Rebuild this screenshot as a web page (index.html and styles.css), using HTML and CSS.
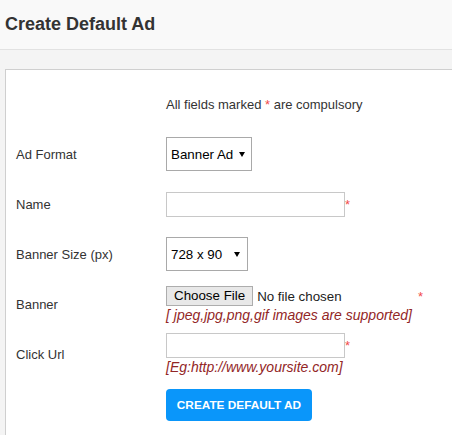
FILE: index.html
```html
<!DOCTYPE html>
<html>
<head>
<meta charset="utf-8">
<title>Create Default Ad</title>
<link rel="stylesheet" href="styles.css">
</head>
<body>
<header class="page-header">
  <h1 class="page-title">Create Default Ad</h1>
</header>
<main class="page-body">
  <section class="panel">
    <form class="ad-form">
      <div class="label"></div>
      <div class="field intro">All fields marked <span class="req">*</span> are compulsory</div>

      <label class="label">Ad Format</label>
      <div class="field">
        <select class="select select-format">
          <option>Banner Ad</option>
        </select>
      </div>

      <label class="label">Name</label>
      <div class="field">
        <input type="text" class="text-input"><span class="req">*</span>
      </div>

      <label class="label">Banner Size (px)</label>
      <div class="field">
        <select class="select select-size">
          <option>728 x 90</option>
        </select>
      </div>

      <label class="label">Banner</label>
      <div class="field">
        <div><input type="file" class="file-input"><span class="req">*</span></div>
        <div class="hint">[ jpeg,jpg,png,gif images are supported]</div>
      </div>

      <label class="label">Click Url</label>
      <div class="field">
        <div><input type="text" class="text-input"><span class="req">*</span></div>
        <div class="hint">[Eg:http://www.yoursite.com]</div>
      </div>
    </form>
    <div class="actions">
      <button type="button" class="btn-primary">Create Default Ad</button>
    </div>
  </section>
</main>
</body>
</html>
```

FILE: styles.css
```css
html, body {
  margin: 0;
  padding: 0;
  overflow: hidden;
  height: 100%;
}
body {
  font-family: "Liberation Sans", Arial, sans-serif;
  color: #333;
  background: #f4f4f4;
  display: flex;
  flex-direction: column;
}
.page-header {
  flex: 0 0 auto;
  height: 49px;
  border-bottom: 1px solid #e2e2e2;
  background: #f9f9f9;
  display: flex;
  align-items: center;
  padding-left: 5px;
}
.page-title {
  margin: 0;
  font-size: 18px;
  font-weight: bold;
  color: #333;
  line-height: 21px;
}
.page-body {
  flex: 1 1 auto;
  min-height: 0;
  display: flex;
  flex-direction: column;
  padding: 19px 0 0 5px;
}
.panel {
  flex: 1 1 auto;
  min-height: 0;
  overflow: hidden;
  background: #fff;
  border-top: 1px solid #cfcfcf;
  border-left: 1px solid #cfcfcf;
  padding: 9px 0 0 10px;
}
.ad-form {
  display: grid;
  grid-template-columns: 150px 1fr;
  grid-auto-rows: 50px;
  align-items: center;
}
.label {
  font-size: 13px;
  color: #333;
}
.field {
  font-size: 13px;
}
.intro {
  color: #333;
}
.req {
  color: #f24b4b;
  font-size: 13px;
}
.select {
  appearance: none;
  -webkit-appearance: none;
  height: 34px;
  border: 1px solid #a9a9a9;
  border-radius: 0;
  background: #fff url("data:image/svg+xml;utf8,<svg xmlns='http://www.w3.org/2000/svg' width='6' height='5'><path d='M0 0h6L3 5z' fill='black'/></svg>") no-repeat right 6px center;
  font-family: "Liberation Sans", Arial, sans-serif;
  font-size: 13.33px;
  color: #000;
  padding: 0 0 0 4px;
  margin: 0;
  display: block;
}
.select-format {
  width: 86px;
}
.select-size {
  width: 82px;
  background-position: right 7px center;
}
.text-input {
  width: 179px;
  height: 25px;
  box-sizing: border-box;
  border: 1px solid #c8c8c8;
  border-radius: 0;
  margin: 0;
  padding: 0 3px;
  font-family: "Liberation Sans", Arial, sans-serif;
  font-size: 13px;
  vertical-align: baseline;
}
.file-input {
  width: 252px;
  margin: 0;
  font-family: "Liberation Sans", Arial, sans-serif;
  font-size: 13.33px;
  color: #222;
}
.file-input::file-selector-button {
  font-family: "Liberation Sans", Arial, sans-serif;
  font-size: 13.33px;
  color: #000;
  background: #e8e8e8;
  border: 1px solid #adadad;
  border-radius: 0;
  padding: 1px 7px;
  height: 20px;
  margin: 0 4px 0 0;
}
.hint {
  font-size: 14px;
  font-style: italic;
  color: #922626;
  line-height: 16px;
  margin-top: 1px;
}
.actions {
  padding-left: 150px;
  margin-top: 10px;
}
.btn-primary {
  height: 32px;
  width: 146px;
  padding: 0;
  border: 0;
  border-radius: 4px;
  background: #0a96fa;
  color: #fff;
  font-family: "Liberation Sans", Arial, sans-serif;
  font-size: 11.8px;
  font-weight: bold;
  text-transform: uppercase;
  cursor: pointer;
}
```
